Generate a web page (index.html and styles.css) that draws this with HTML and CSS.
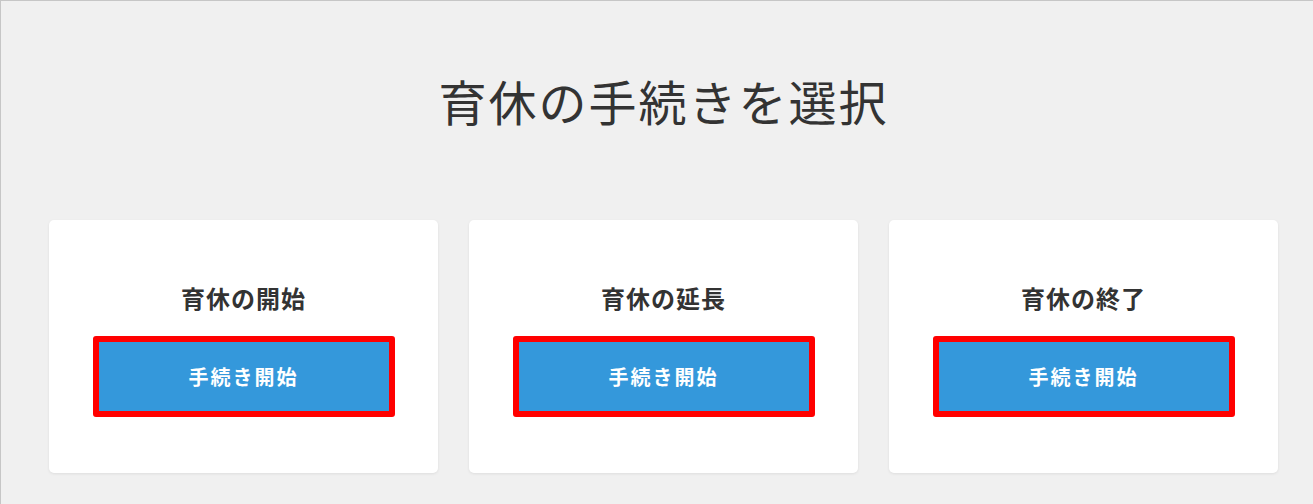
FILE: index.html
```html
<!DOCTYPE html>
<html lang="ja">
<head>
<meta charset="utf-8">
<title>育休の手続きを選択</title>
<link rel="stylesheet" href="styles.css">
</head>
<body>
<main class="page">
  <h1 class="page-title">育休の手続きを選択</h1>
  <section class="cards">
    <div class="card">
      <h2 class="card-title">育休の開始</h2>
      <div class="highlight"><button class="btn">手続き開始</button></div>
    </div>
    <div class="card">
      <h2 class="card-title">育休の延長</h2>
      <div class="highlight"><button class="btn">手続き開始</button></div>
    </div>
    <div class="card">
      <h2 class="card-title">育休の終了</h2>
      <div class="highlight"><button class="btn">手続き開始</button></div>
    </div>
  </section>
</main>
</body>
</html>
```
FILE: styles.css
```css
html, body {
  margin: 0;
  padding: 0;
}
body {
  background: #f0f0f0;
  font-family: "Noto Sans CJK JP", "Noto Sans", sans-serif;
  color: #333333;
  height: 504px;
  box-sizing: border-box;
  border-top: 1px solid #c6c6c6;
  border-left: 1px solid #c6c6c6;
  overflow: hidden;
}
.page {
  width: 1229px;
  margin-left: 48px;
  padding-top: 67px;
}
.page-title {
  margin: 0;
  text-align: center;
  font-size: 48px;
  line-height: 64px;
  font-weight: 400;
  letter-spacing: 2px;
  color: #333333;
}
.cards {
  margin-top: 88px;
  display: grid;
  grid-template-columns: repeat(3, 389px);
  column-gap: 31px;
}
.card {
  background: #ffffff;
  border-radius: 5px;
  box-shadow: 0 1px 3px rgba(0, 0, 0, 0.08);
  padding: 62px 0 56px;
  display: flex;
  flex-direction: column;
  align-items: center;
}
.card-title {
  margin: 0;
  font-size: 24px;
  line-height: 32px;
  font-weight: 700;
  letter-spacing: 1px;
  color: #333333;
}
.highlight {
  margin-top: 22px;
  border: 6px solid #ff0000;
  border-radius: 3px;
  display: flex;
}
.btn {
  width: 290px;
  height: 69px;
  border: 0;
  margin: 0;
  padding: 0;
  background: #3498db;
  color: #ffffff;
  font-family: "Noto Sans CJK JP", "Noto Sans", sans-serif;
  font-size: 20px;
  font-weight: 700;
  letter-spacing: 2px;
  cursor: pointer;
}
```
